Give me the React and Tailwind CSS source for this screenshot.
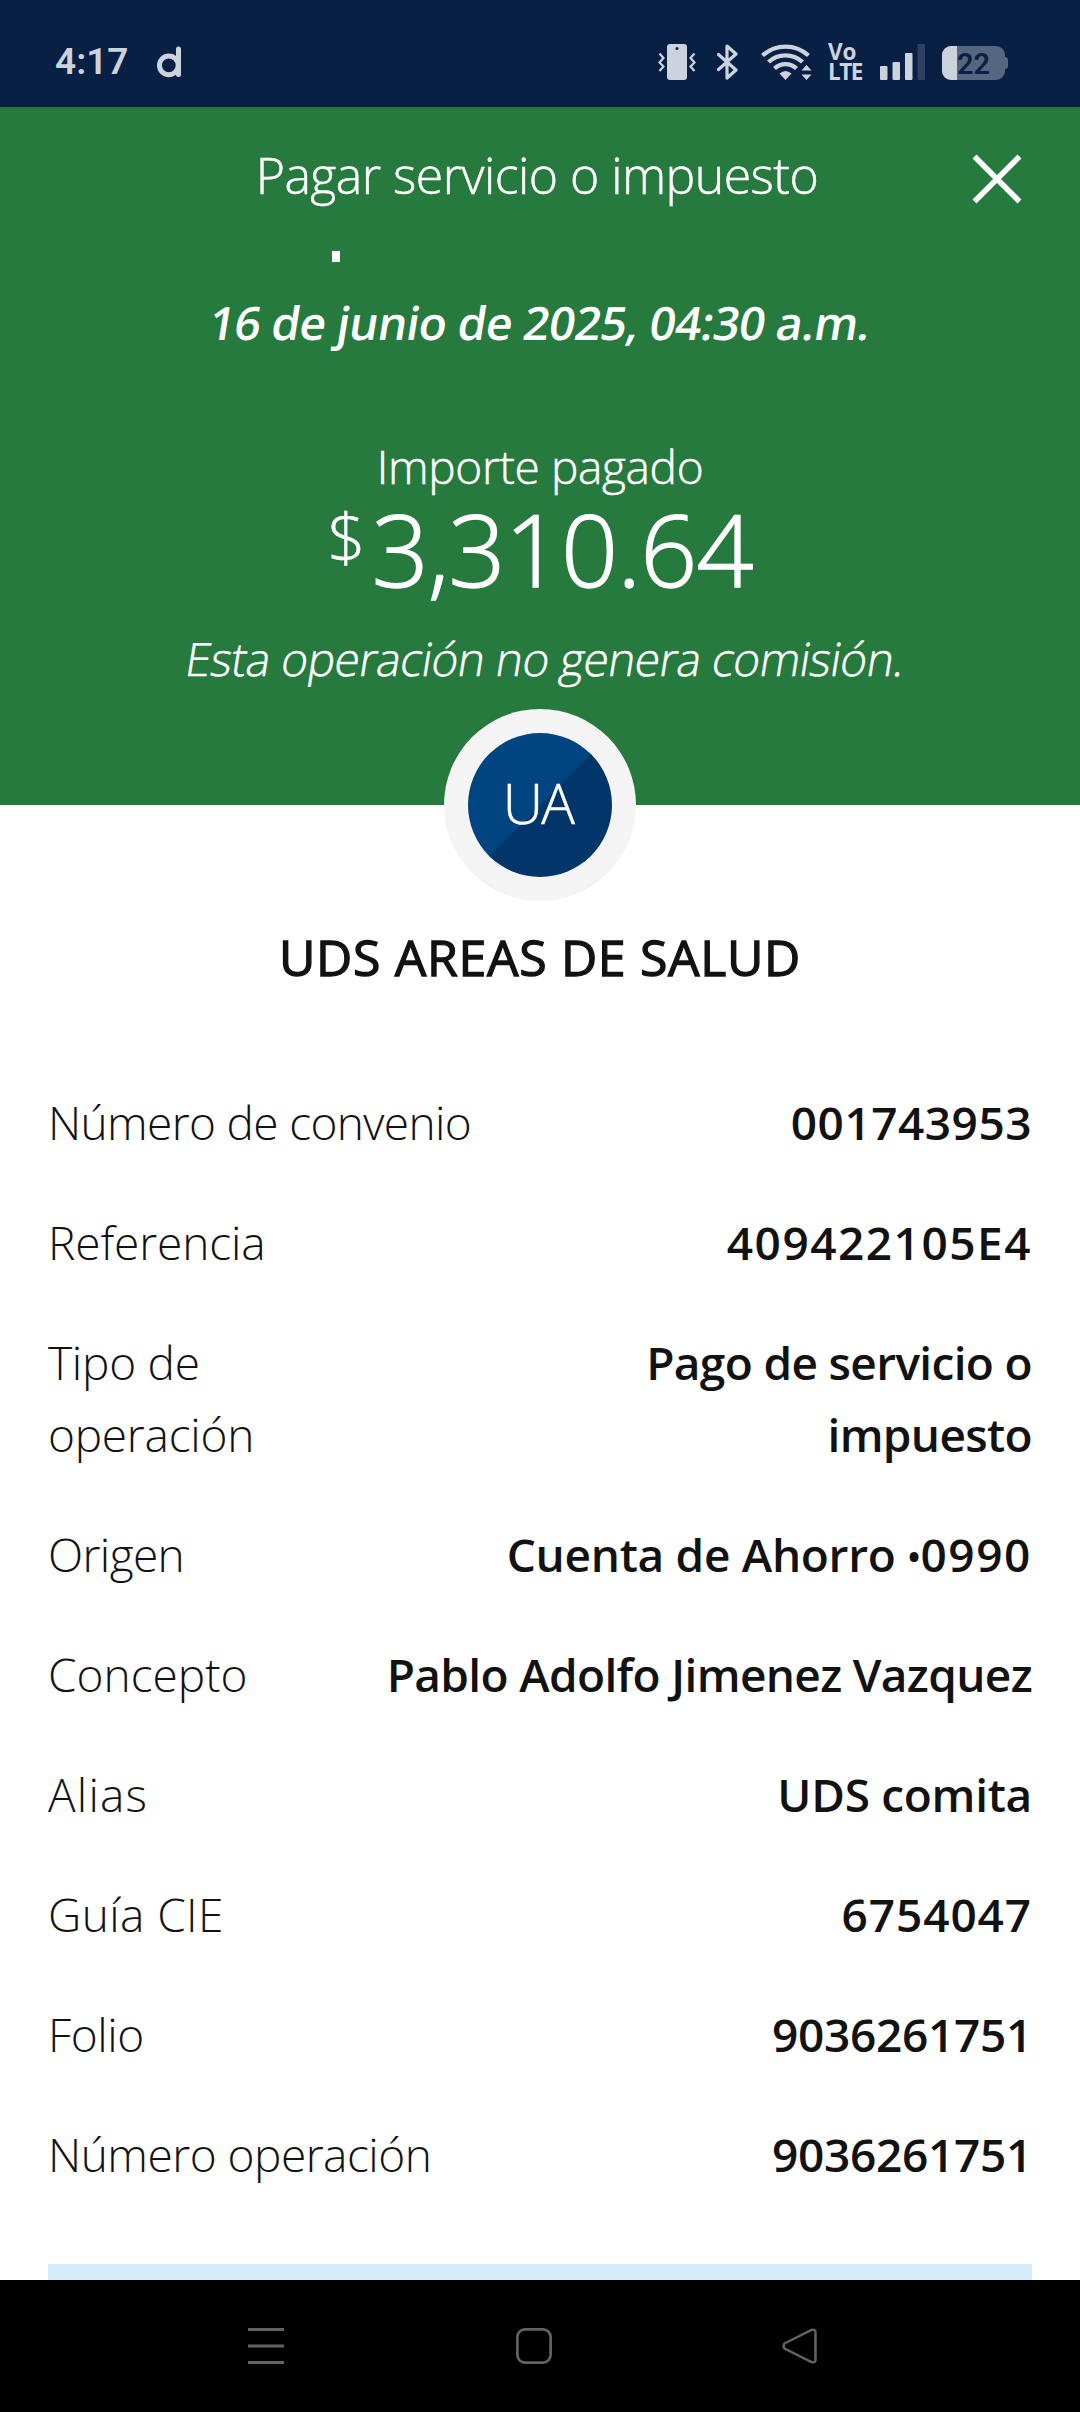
import { clsx } from 'clsx';

const DETAILS = [
  { label: 'Número de convenio', value: '001743953', labelCls: 'tracking-[-0.64px]', valueCls: 'tracking-[0.5px]' },
  { label: 'Referencia', value: '409422105E4', labelCls: 'tracking-[-0.1px]', valueCls: 'tracking-[1.5px]' },
  {
    label: 'Tipo de operación',
    value: 'Pago de servicio o impuesto',
    labelCls: 'w-[220px] tracking-[-0.25px]',
    valueCls: 'w-[420px] tracking-[-0.65px]',
  },
  {
    label: 'Origen',
    value: (
      <>
        Cuenta de Ahorro <span className="relative -top-[2px] text-[36px] leading-none">•</span>
        <span className="tracking-[1.6px]">0990</span>
      </>
    ),
    labelCls: 'tracking-[-0.6px]',
    valueCls: 'whitespace-nowrap tracking-[-0.3px]',
  },
  { label: 'Concepto', value: 'Pablo Adolfo Jimenez Vazquez', labelCls: 'tracking-[0px]', valueCls: 'tracking-[-0.65px]' },
  { label: 'Alias', value: 'UDS comita', labelCls: 'tracking-[1.2px]', valueCls: 'tracking-[-0.3px]' },
  { label: 'Guía CIE', value: '6754047', labelCls: 'tracking-[0.4px]', valueCls: 'tracking-[0.9px]' },
  { label: 'Folio', value: '9036261751', labelCls: 'tracking-[-0.4px]', valueCls: 'tracking-[-0.3px]' },
  { label: 'Número operación', value: '9036261751', labelCls: 'tracking-[-0.5px]', valueCls: 'tracking-[-0.3px]' },
];

function VibrateIcon() {
  return (
    <svg width="38" height="36" viewBox="0 0 38 36" fill="none">
      <rect x="9" y="0" width="20" height="36" rx="3" fill="#ccd3dc" />
      <circle cx="19" cy="4.5" r="1.5" fill="#072044" />
      <path d="M1.5 9.5l4 4.5-4 4.5 4 4-4 4.5M36.5 9.5l-4 4.5 4 4.5-4 4 4 4.5" stroke="#ccd3dc" strokeWidth="2.2" />
    </svg>
  );
}

function BluetoothIcon() {
  return (
    <svg width="21" height="36" viewBox="0 0 21 36" fill="none">
      <path d="M1.5 10.5L19 26l-9 8V2l9 8L1.5 25.5" stroke="#ccd3dc" strokeWidth="3.2" strokeLinejoin="round" strokeLinecap="round" />
    </svg>
  );
}

function WifiIcon() {
  return (
    <svg width="51" height="36" viewBox="0 0 51 36" fill="none">
      <g stroke="#ccd3dc" strokeWidth="4.3">
        <path d="M1.5 11.5a34 34 0 0 1 46 0" />
        <path d="M7.5 18a25 25 0 0 1 34 0" />
        <path d="M13.5 24.5a16 16 0 0 1 22 0" />
      </g>
      <path d="M18.5 29.5q6-5 12 0L24.5 36z" fill="#ccd3dc" />
      <path d="M40.5 26.5l5-5.5 5 5.5zM40.5 30.5l5 5.5 5-5.5z" fill="#ccd3dc" />
    </svg>
  );
}

function SignalIcon() {
  return (
    <svg width="45" height="36" viewBox="0 0 45 36" fill="#ccd3dc">
      <rect x="0" y="22" width="7.5" height="14" rx="1" />
      <rect x="12.5" y="18" width="7.5" height="18" rx="1" />
      <rect x="25" y="9" width="7.5" height="27" rx="1" />
      <rect x="37.5" y="0" width="7.5" height="36" rx="1" fill="#2d4263" />
    </svg>
  );
}

function Battery({ level }) {
  return (
    <div className="flex items-center">
      <div className="relative w-[63px] h-[34px] rounded-[9px] overflow-hidden bg-[#56667f]">
        <div className="w-[15px] h-full bg-[#ccd3dc]" />
        <span className="absolute left-[15px] top-0 font-[Roboto] text-[29px] leading-[36px] font-semibold text-[#072044]">
          {level}
        </span>
      </div>
      <div className="w-[3px] h-[12px] rounded-r-[3px] bg-[#56667f]" />
    </div>
  );
}

function StatusBar() {
  return (
    <div className="h-[107px] shrink-0 bg-[#072044] text-[#ccd3dc] flex items-start pt-[44px] pl-[55px]">
      <span className="w-[102px] font-[Roboto] text-[37px] leading-[36px] font-semibold">4:17</span>
      <svg className="mt-[1px]" width="26" height="33" viewBox="0 0 26 33" fill="none" stroke="#ccd3dc" strokeWidth="5">
        <circle cx="11.8" cy="20.3" r="9.4" />
        <path d="M21.5 4v25.5" strokeLinecap="round" />
      </svg>
      <div className="ml-[475px] flex items-start">
        <VibrateIcon />
        <div className="ml-[21px]"><BluetoothIcon /></div>
        <div className="ml-[23px]"><WifiIcon /></div>
        <div className="ml-[16px] w-[35px] h-[36px] font-['Open_Sans'] font-bold text-[22.5px] leading-[20px] -mt-[2px]">
          <div>Vo</div>
          <div className="tracking-[-1.5px]">LTE</div>
        </div>
        <div className="ml-[17px]"><SignalIcon /></div>
        <div className="ml-[17px] mt-[2px]"><Battery level={22} /></div>
      </div>
    </div>
  );
}

function Header() {
  return (
    <header className="h-[698px] shrink-0 bg-[#277a3e] text-white text-center font-light text-[46px] leading-[72px] [-webkit-text-stroke:0.5px_white]">
      <div className="flex items-start pt-[32px]">
        <h1 className="flex-1 pl-[102px] text-[50px] tracking-[-0.55px]">Pagar servicio o impuesto</h1>
        <svg className="mt-[15px] mr-[58px]" width="50" height="50" viewBox="0 0 50 50" stroke="white" strokeWidth="5.5">
          <path d="M2.5 2.5l45 45M47.5 2.5l-45 45" />
        </svg>
      </div>

      <div className="ml-[332px] mt-[40px] w-[8px] h-[11px] bg-white" />

      <div className="mt-[24px] font-semibold tracking-[-0.55px] -skew-x-9 [-webkit-text-stroke:0px]">
        16 de junio de 2025, 04:30 a.m.
      </div>
      <div className="mt-[72px] tracking-[-0.35px]">Importe pagado</div>
      <div className="-mt-[4px] flex items-start justify-center leading-[100px]">
        <span className="mt-[2px] text-[67px] leading-[72px]">$</span>
        <span className="ml-[6px] text-[100px] tracking-[-0.85px] [-webkit-text-stroke:1.4px_white]">3,310.64</span>
      </div>
      <div className="mt-[24px] pl-[11px] tracking-[-0.57px] -skew-x-9">Esta operación no genera comisión.</div>
    </header>
  );
}

function Avatar({ initials }) {
  return (
    <div className="relative mx-auto -mt-[96px] size-[192px] rounded-full bg-[#f4f4f4] p-[24px]">
      <div className="size-[144px] rounded-full bg-[linear-gradient(135deg,#004481_50%,#02356a_50%)] flex items-center justify-center pb-[7px] pr-[4px] text-white text-[56px] font-light tracking-[-1.8px] [-webkit-text-stroke:0.5px_white]">
        {initials}
      </div>
    </div>
  );
}

function NavBar() {
  return (
    <nav className="h-[132px] shrink-0 bg-black flex pt-[48px] pl-[248px]">
      <svg width="36" height="36" viewBox="0 0 36 36" stroke="#636363" strokeWidth="3">
        <path d="M0 1.5h36M0 18h36M0 34.5h36" />
      </svg>
      <svg className="ml-[232px]" width="36" height="36" viewBox="0 0 36 36" fill="none" stroke="#636363" strokeWidth="2.7">
        <rect x="1.4" y="1.4" width="33.2" height="33.2" rx="7.5" />
      </svg>
      <svg className="ml-[230px]" width="36" height="36" viewBox="0 0 36 36" fill="none" stroke="#636363" strokeWidth="2.5">
        <path d="M2.5 15.5L29.5 2q4-1 4 2v28q0 3-4 2L2.5 20.5q-2-2.5 0-5z" />
      </svg>
    </nav>
  );
}

export default function App() {
  return (
    <div className="w-[1080px] h-[2412px] overflow-hidden flex flex-col bg-white text-[#121212] font-['Open_Sans',sans-serif]">
      <StatusBar />
      <Header />

      <main className="flex-1 px-[48px]">
        <Avatar initials="UA" />
        <h2 className="mt-[20px] text-center text-[50px] leading-[72px] tracking-[0.65px] [-webkit-text-stroke:1.3px_#121212]">
          UDS AREAS DE SALUD
        </h2>

        <dl className="mt-[93px] flex flex-col gap-[48px] text-[46px] leading-[72px]">
          {DETAILS.map((item) => (
            <div key={item.label} className="flex justify-between">
              <dt className={clsx('font-light', item.labelCls)}>{item.label}</dt>
              <dd className={clsx('font-semibold text-right', item.valueCls)}>{item.value}</dd>
            </div>
          ))}
        </dl>

        <div className="mt-[74px] h-[16px] bg-[#d4ecfb]" />
      </main>

      <NavBar />
    </div>
  );
}
